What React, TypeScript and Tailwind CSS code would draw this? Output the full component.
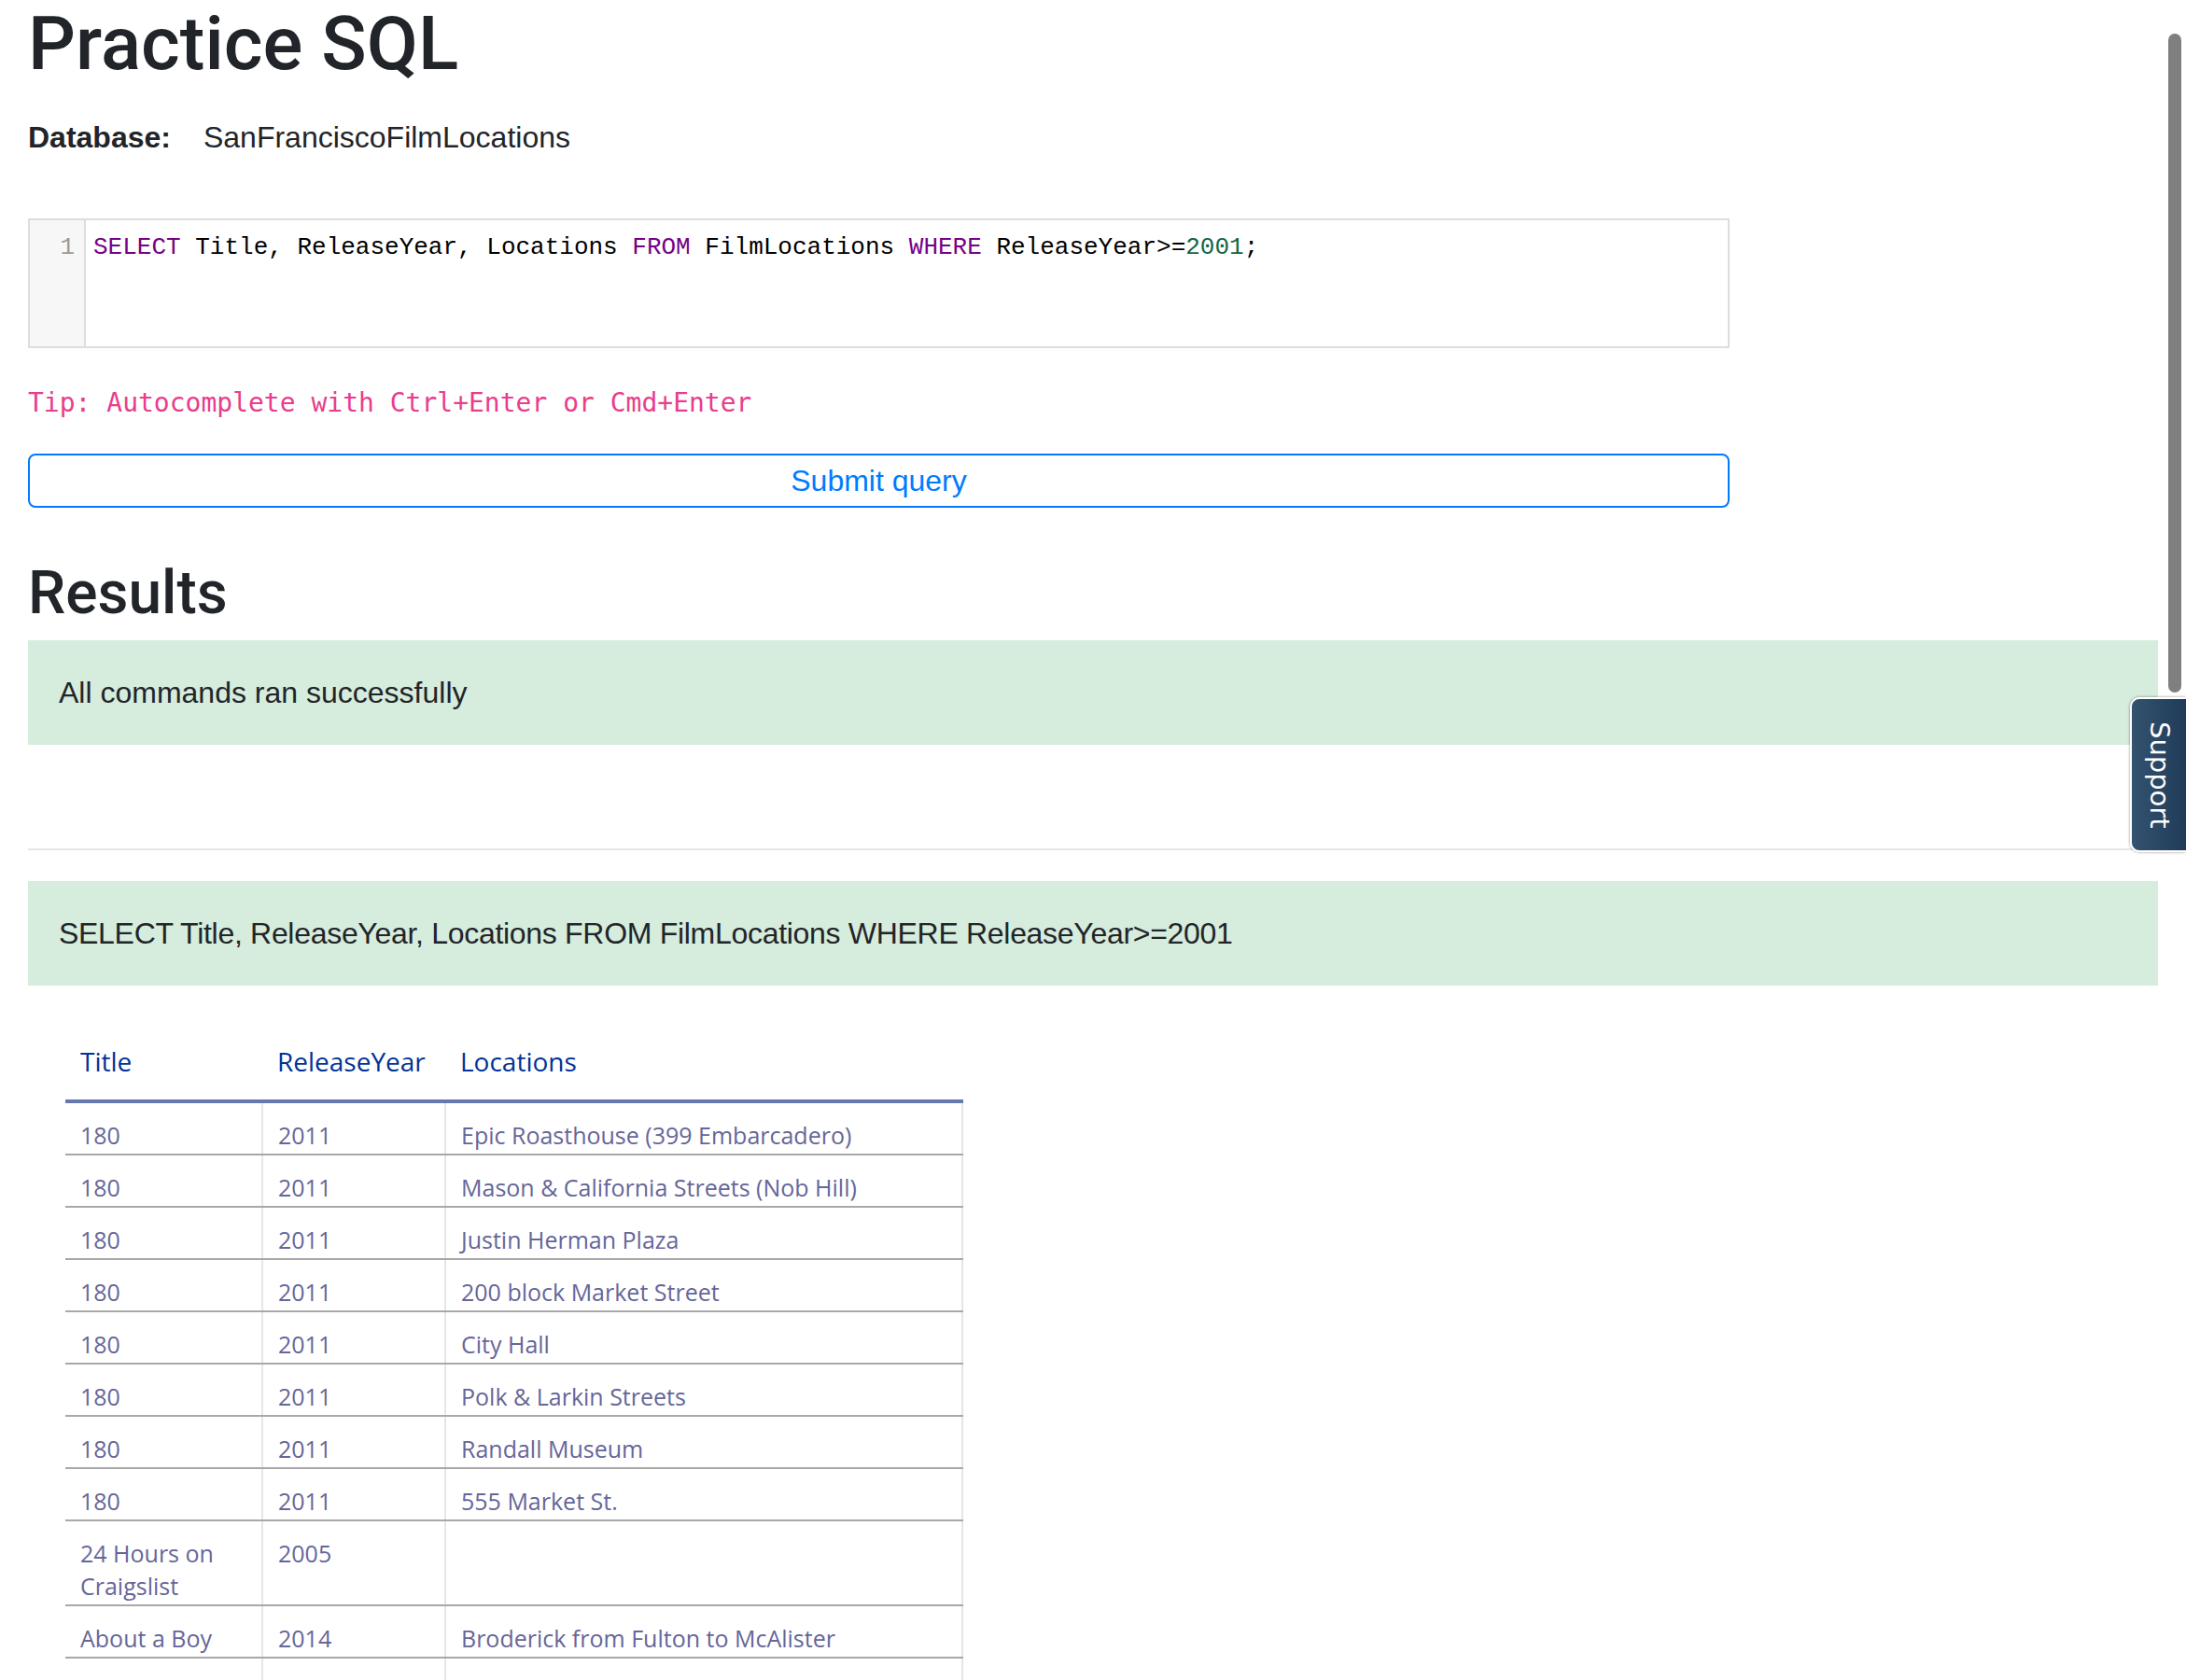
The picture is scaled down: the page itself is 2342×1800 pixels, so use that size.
import React from 'react';

const rows: [string, string, string][] = [
  ['180', '2011', 'Epic Roasthouse (399 Embarcadero)'],
  ['180', '2011', 'Mason & California Streets (Nob Hill)'],
  ['180', '2011', 'Justin Herman Plaza'],
  ['180', '2011', '200 block Market Street'],
  ['180', '2011', 'City Hall'],
  ['180', '2011', 'Polk & Larkin Streets'],
  ['180', '2011', 'Randall Museum'],
  ['180', '2011', '555 Market St.'],
  ['24 Hours on Craigslist', '2005', ''],
  ['About a Boy', '2014', 'Broderick from Fulton to McAlister'],
  ['About a Boy', '2014', 'Hayes Street at Octavia'],
];

const SqlEditor = () => {
  return (
    <div className="mt-[63px] flex h-[139px] w-[1823px] border-2 border-[#dddddd] bg-white font-['Liberation_Mono',monospace] text-[26px] leading-[30px]">
      <div className="w-[60px] shrink-0 border-r-2 border-[#dddddd] bg-[#f7f7f7] pt-[14px] pr-[10px] text-right text-[#999999]">
        1
      </div>
      <div className="pt-[14px] pl-[8px] whitespace-pre text-black">
        <span className="text-[#770088]">SELECT</span> Title, ReleaseYear, Locations{' '}
        <span className="text-[#770088]">FROM</span> FilmLocations{' '}
        <span className="text-[#770088]">WHERE</span> ReleaseYear&gt;=
        <span className="text-[#116644]">2001</span>;
      </div>
    </div>
  );
};

const ResultsTable = () => {
  return (
    <table className="mt-[46px] ml-[40px] w-[961px] table-fixed border-collapse text-left font-['Open_Sans',sans-serif]">
      <colgroup>
        <col className="w-[211px]" />
        <col className="w-[196px]" />
        <col className="w-[554px]" />
      </colgroup>
      <thead>
        <tr>
          {['Title', 'ReleaseYear', 'Locations'].map((h) => (
            <th
              key={h}
              className="border-b-4 border-[#6678b1] px-[16px] pt-[17px] pb-[23px] text-[28px] leading-[36px] font-normal text-[#003399]"
            >
              {h}
            </th>
          ))}
        </tr>
      </thead>
      <tbody>
        {rows.map((r, i) => (
          <tr key={i}>
            {r.map((c, j) => (
              <td
                key={j}
                className="border-r-2 border-b-2 border-r-[#e6e6e6] border-b-[#a8a8a8] px-[16px] pt-[17px] pb-[2px] align-top text-[25px] leading-[35px] text-[#666699]"
              >
                {c}
              </td>
            ))}
          </tr>
        ))}
      </tbody>
    </table>
  );
};

const App = () => {
  return (
    <div className="relative min-h-[1900px] w-full overflow-hidden bg-white px-[30px] font-['Liberation_Sans',Arial,sans-serif] text-[#212529]">
      <h1 className="font-['Roboto',sans-serif] text-[80px] leading-[94px] font-medium">Practice SQL</h1>

      <div className="mt-[29px] text-[32px] leading-[48px]">
        <span className="mr-[35px] font-bold">Database:</span>
        <span>SanFranciscoFilmLocations</span>
      </div>

      <SqlEditor />

      <p className="mt-[38px] font-['DejaVu_Sans_Mono',monospace] text-[28px] leading-[42px] text-[#e83e8c]">
        Tip: Autocomplete with Ctrl+Enter or Cmd+Enter
      </p>

      <button className="mt-[33px] flex h-[58px] w-[1823px] items-center justify-center rounded-[8px] border-2 border-[#007bff] bg-white text-[32px] text-[#007bff]">
        Submit query
      </button>

      <h2 className="mt-[53px] font-['Roboto',sans-serif] text-[64px] leading-[77px] font-medium">Results</h2>

      <div className="mt-[12px] flex h-[112px] items-center bg-[#d6ecdc] pl-[33px] text-[32px]">
        All commands ran successfully
      </div>

      <div className="mt-[111px] h-[2px] bg-[#e6e6e6]" />

      <div className="mt-[33px] flex h-[112px] items-center bg-[#d6ecdc] pl-[33px] text-[32px] tracking-[-0.3px]">
        SELECT Title, ReleaseYear, Locations FROM FilmLocations WHERE ReleaseYear&gt;=2001
      </div>

      <ResultsTable />

      {/* overlay scrollbar thumb */}
      <div className="absolute top-[36px] right-[5px] h-[706px] w-[14px] rounded-full bg-[#7f7f7f]" />

      {/* support tab */}
      <div className="absolute top-[747px] right-0 flex h-[166px] w-[60px] items-center justify-center rounded-l-[10px] border-2 border-r-0 border-white bg-gradient-to-r from-[#34536f] to-[#1f3b59] shadow-[0_0_3px_rgba(0,0,0,0.45)]">
        <span className="font-['DejaVu_Sans',sans-serif] text-[29px] leading-none text-white [writing-mode:vertical-rl]">
          Support
        </span>
      </div>
    </div>
  );
};

export default App;
